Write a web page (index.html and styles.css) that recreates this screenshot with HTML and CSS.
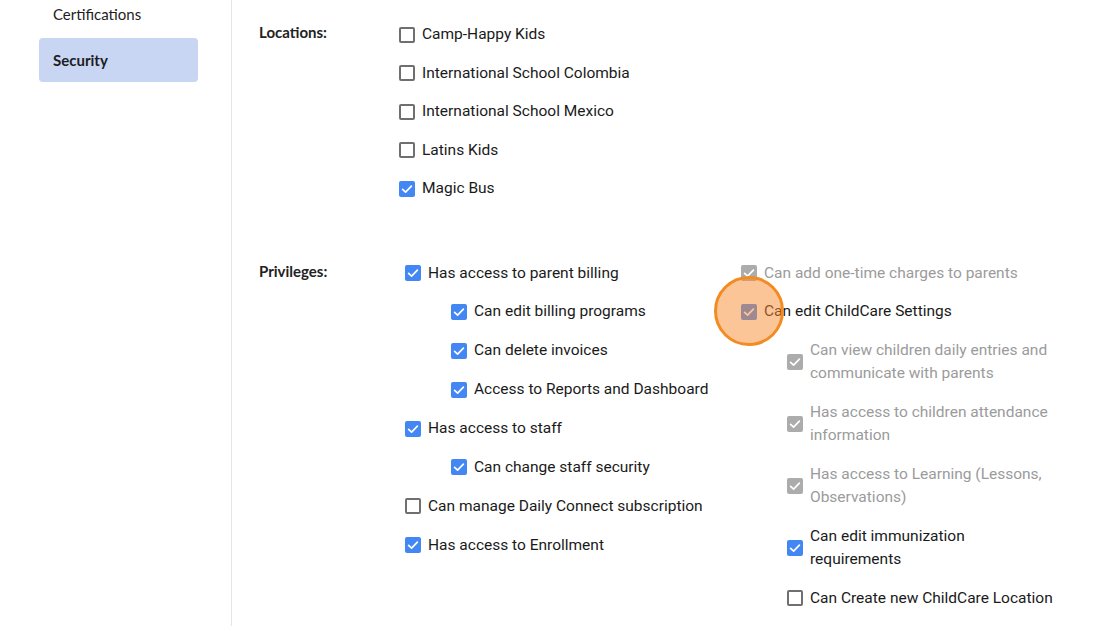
FILE: index.html
```html
<!DOCTYPE html>
<html>
<head>
<meta charset="utf-8">
<link rel="stylesheet" href="styles.css">
</head>
<body>
<div class="layout">
  <aside class="sidebar">
    <div class="nav-item first">Certifications</div>
    <div class="nav-item active">Security</div>
  </aside>
  <main class="content">
    <section class="field locations">
      <div class="field-label">Locations:</div>
      <div class="options">
        <label class="opt"><span class="cb"></span><span class="txt">Camp-Happy Kids</span></label>
        <label class="opt"><span class="cb"></span><span class="txt">International School Colombia</span></label>
        <label class="opt"><span class="cb"></span><span class="txt">International School Mexico</span></label>
        <label class="opt"><span class="cb"></span><span class="txt">Latins Kids</span></label>
        <label class="opt"><span class="cb on"><svg viewBox="0 0 16 16"><path d="M3.6 8.3 L6.6 11.1 L12.4 5.2"/></svg></span><span class="txt">Magic Bus</span></label>
      </div>
    </section>
    <section class="field privileges">
      <div class="field-label">Privileges:</div>
      <div class="priv-grid">
        <div class="options col1">
          <label class="opt"><span class="cb on"><svg viewBox="0 0 16 16"><path d="M3.6 8.3 L6.6 11.1 L12.4 5.2"/></svg></span><span class="txt">Has access to parent billing</span></label>
          <label class="opt sub"><span class="cb on"><svg viewBox="0 0 16 16"><path d="M3.6 8.3 L6.6 11.1 L12.4 5.2"/></svg></span><span class="txt">Can edit billing programs</span></label>
          <label class="opt sub"><span class="cb on"><svg viewBox="0 0 16 16"><path d="M3.6 8.3 L6.6 11.1 L12.4 5.2"/></svg></span><span class="txt">Can delete invoices</span></label>
          <label class="opt sub"><span class="cb on"><svg viewBox="0 0 16 16"><path d="M3.6 8.3 L6.6 11.1 L12.4 5.2"/></svg></span><span class="txt">Access to Reports and Dashboard</span></label>
          <label class="opt"><span class="cb on"><svg viewBox="0 0 16 16"><path d="M3.6 8.3 L6.6 11.1 L12.4 5.2"/></svg></span><span class="txt">Has access to staff</span></label>
          <label class="opt sub"><span class="cb on"><svg viewBox="0 0 16 16"><path d="M3.6 8.3 L6.6 11.1 L12.4 5.2"/></svg></span><span class="txt">Can change staff security</span></label>
          <label class="opt"><span class="cb"></span><span class="txt">Can manage Daily Connect subscription</span></label>
          <label class="opt"><span class="cb on"><svg viewBox="0 0 16 16"><path d="M3.6 8.3 L6.6 11.1 L12.4 5.2"/></svg></span><span class="txt">Has access to Enrollment</span></label>
        </div>
        <div class="options col2">
          <label class="opt disabled"><span class="cb on"><svg viewBox="0 0 16 16"><path d="M3.6 8.3 L6.6 11.1 L12.4 5.2"/></svg></span><span class="txt">Can add one-time charges to parents</span></label>
          <label class="opt clicked"><span class="cb on"><svg viewBox="0 0 16 16"><path d="M3.6 8.3 L6.6 11.1 L12.4 5.2"/></svg></span><span class="txt">Can edit ChildCare Settings</span><span class="click-ring"></span></label>
          <label class="opt sub disabled"><span class="cb on"><svg viewBox="0 0 16 16"><path d="M3.6 8.3 L6.6 11.1 L12.4 5.2"/></svg></span><span class="txt">Can view children daily entries and communicate with parents</span></label>
          <label class="opt sub disabled"><span class="cb on"><svg viewBox="0 0 16 16"><path d="M3.6 8.3 L6.6 11.1 L12.4 5.2"/></svg></span><span class="txt">Has access to children attendance information</span></label>
          <label class="opt sub disabled"><span class="cb on"><svg viewBox="0 0 16 16"><path d="M3.6 8.3 L6.6 11.1 L12.4 5.2"/></svg></span><span class="txt">Has access to Learning (Lessons, Observations)</span></label>
          <label class="opt sub"><span class="cb on"><svg viewBox="0 0 16 16"><path d="M3.6 8.3 L6.6 11.1 L12.4 5.2"/></svg></span><span class="txt">Can edit immunization requirements</span></label>
          <label class="opt sub"><span class="cb"></span><span class="txt">Can Create new ChildCare Location</span></label>
        </div>
      </div>
    </section>
  </main>
</div>
</body>
</html>
```

FILE: styles.css
```css
html, body {
  margin: 0;
  padding: 0;
  background: #ffffff;
  height: 100%;
  overflow: hidden;
}

.layout {
  display: flex;
  height: 626px;
}

.sidebar {
  width: 232px;
  flex: none;
  border-right: 1px solid #e6e6e6;
  padding: 0 33px 0 39px;
  box-sizing: border-box;
  display: flex;
  flex-direction: column;
  gap: 10px;
  font-family: Lato, "Liberation Sans", sans-serif;
  font-size: 15px;
  color: #1d1d1f;
}

.nav-item {
  height: 44px;
  line-height: 44px;
  padding: 0 14px;
  border-radius: 4px;
}

.nav-item.first {
  height: 28px;
  line-height: 28px;
}

.nav-item.active {
  background: #c9d6f3;
  font-weight: 700;
}

.content {
  flex: 1;
  padding: 23px 0 0 27px;
  display: flex;
  flex-direction: column;
  gap: 61.5px;
}

.field {
  display: flex;
  align-items: flex-start;
}

.field-label {
  width: 140px;
  flex: none;
  font-family: Lato, "Liberation Sans", sans-serif;
  font-weight: 700;
  font-size: 15px;
  line-height: 18px;
  color: #222;
}

.options {
  display: flex;
  flex-direction: column;
  gap: 15.9px;
}

.locations .options {
  gap: 15.5px;
}

.priv-grid {
  display: flex;
  padding-left: 6px;
}

.col1 {
  width: 336px;
  flex: none;
}

.col2 {
  width: 330px;
  flex: none;
}

.opt {
  display: flex;
  align-items: center;
  gap: 7px;
  font-family: Roboto, "Liberation Sans", sans-serif;
  font-size: 15.5px;
  line-height: 23px;
  color: #1a1a1a;
  position: relative;
}

.opt.sub {
  padding-left: 46px;
}

.col2 .opt.sub .txt {
  max-width: 248px;
}

.cb {
  width: 16px;
  height: 16px;
  flex: none;
  box-sizing: border-box;
  border: 2px solid #6f6f6f;
  border-radius: 2px;
  background: #fff;
  display: flex;
}

.cb svg {
  width: 16px;
  height: 16px;
  fill: none;
  stroke: #ffffff;
  stroke-width: 1.7;
  stroke-linecap: round;
  stroke-linejoin: round;
}

.cb.on {
  border: none;
  background: #4287f3;
}

.opt.disabled {
  color: #9b9b9b;
}

.opt.disabled .cb.on {
  background: #acacac;
}

.click-ring {
  position: absolute;
  left: -27px;
  top: -24px;
  width: 70px;
  height: 70px;
  border-radius: 50%;
  border: 3px solid #f28c22;
  background: rgba(250, 140, 50, 0.5);
  box-sizing: border-box;
  pointer-events: none;
}
```
